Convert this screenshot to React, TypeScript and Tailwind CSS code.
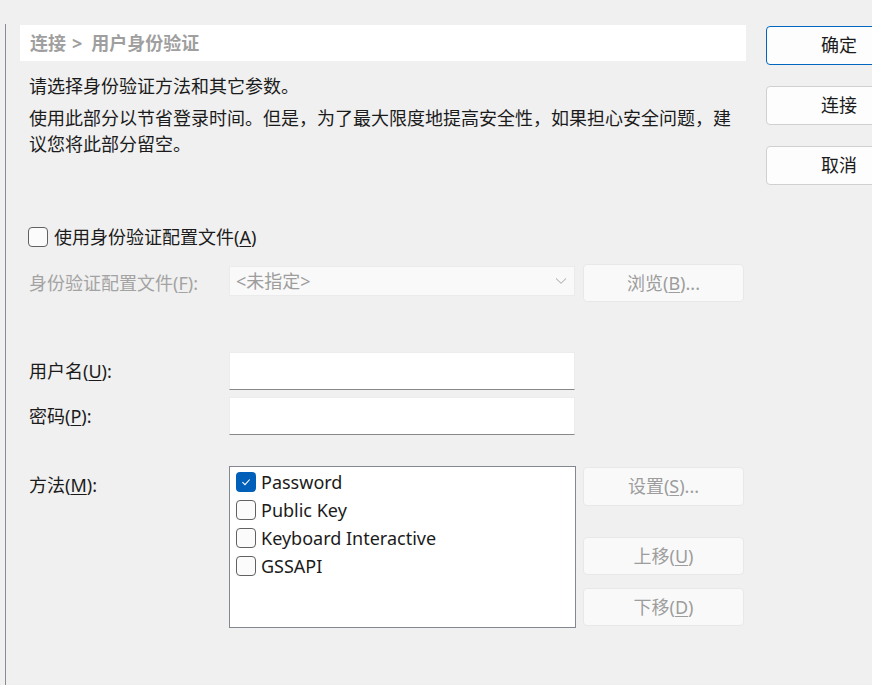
import React from "react";

function Box({ checked }: { checked?: boolean }) {
  return checked ? (
    <span className="flex h-[20px] w-[20px] shrink-0 items-center justify-center rounded-[4px] bg-[#005fb8]">
      <svg width="12" height="12" viewBox="0 0 12 12">
        <path d="M2.4 6.2 L5 8.7 L9.7 3.5" fill="none" stroke="white" strokeWidth="1.1" />
      </svg>
    </span>
  ) : (
    <span className="h-[20px] w-[20px] shrink-0 rounded-[4px] border border-[#616161] bg-[#fbfbfb]" />
  );
}

function DisabledButton({ children, className = "" }: { children: React.ReactNode; className?: string }) {
  return (
    <div
      className={
        "flex w-[161px] shrink-0 items-center justify-center rounded-[4px] border border-[#e8e8e8] bg-[#f9f9f9] text-[#9d9d9d] " +
        className
      }
    >
      {children}
    </div>
  );
}

export default function App() {
  return (
    <div className="flex h-[685px] w-[872px] overflow-hidden bg-[#f0f0f0] font-['Noto_Sans','Noto_Sans_CJK_SC',sans-serif] text-[18px] text-[#1b1b1b]">
      <div className="ml-[5px] mt-[24px] flex w-[741px] shrink-0 flex-col border-l border-[#8b8b98] pl-[14px] pt-[1px]">
        <div className="flex h-[36px] items-center bg-white pl-[10px] font-bold text-[#9f9f9f]">
          <span>连接</span>
          <span className="ml-[6px] mr-[9px]">&gt;</span>
          <span>用户身份验证</span>
        </div>
        <p className="mt-[12px] pl-[9px] leading-[26px]">请选择身份验证方法和其它参数。</p>
        <p className="mt-[6px] pl-[9px] leading-[26px]">
          使用此部分以节省登录时间。但是，为了最大限度地提高安全性，如果担心安全问题，建
          <br />
          议您将此部分留空。
        </p>

        <div className="mt-[67px] flex h-[26px] items-center gap-[6px] pl-[8px]">
          <Box />
          <span className="leading-[26px]">
            使用身份验证配置文件(<u className="underline-offset-2">A</u>)
          </span>
        </div>

        <div className="mt-[14px] flex h-[38px] items-start">
          <div className="w-[209px] shrink-0 self-center pl-[9px] text-[#a3a3a3]">
            身份验证配置文件(<u className="underline-offset-2">F</u>):
          </div>
          <div className="mt-[2px] flex h-[30px] w-[346px] shrink-0 items-center justify-between border border-[#ebebeb] bg-[#f9f9f9] pl-[6px] pr-[7px] text-[#9d9d9d]">
            <span>&lt;未指定&gt;</span>
            <svg width="12" height="8" viewBox="0 0 12 8">
              <path d="M1 1.5 L6 6.3 L11 1.5" fill="none" stroke="#a3a3a3" strokeWidth="1" />
            </svg>
          </div>
          <DisabledButton className="ml-[8px] h-[38px]">
            浏览(<u className="underline-offset-2">B</u>)...
          </DisabledButton>
        </div>

        <div className="mt-[50px] flex h-[38px] items-center">
          <div className="w-[209px] shrink-0 pl-[9px]">
            用户名(<u className="underline-offset-2">U</u>):
          </div>
          <div className="h-[38px] w-[346px] shrink-0 border border-[#ececec] border-b-[#888888] bg-white" />
        </div>

        <div className="mt-[7px] flex h-[38px] items-center">
          <div className="w-[209px] shrink-0 pl-[9px]">
            密码(<u className="underline-offset-2">P</u>):
          </div>
          <div className="h-[38px] w-[346px] shrink-0 border border-[#ececec] border-b-[#888888] bg-white" />
        </div>

        <div className="mt-[31px] flex items-start">
          <div className="mt-[6px] w-[209px] shrink-0 pl-[9px] leading-[26px]">
            方法(<u className="underline-offset-2">M</u>):
          </div>
          <div className="flex h-[162px] w-[347px] shrink-0 flex-col border border-[#828790] bg-white pl-[6px] pt-[1px]">
            {[
              { label: "Password", checked: true },
              { label: "Public Key" },
              { label: "Keyboard Interactive" },
              { label: "GSSAPI" },
            ].map((it) => (
              <div key={it.label} className="flex h-[28px] items-center gap-[5px]">
                <Box checked={it.checked} />
                <span className="leading-[28px]">{it.label}</span>
              </div>
            ))}
          </div>
          <div className="ml-[7px] flex flex-col">
            <DisabledButton className="mt-[1px] h-[39px]">
              设置(<u className="underline-offset-2">S</u>)...
            </DisabledButton>
            <DisabledButton className="mt-[31px] h-[38px]">
              上移(<u className="underline-offset-2">U</u>)
            </DisabledButton>
            <DisabledButton className="mt-[13px] h-[38px]">
              下移(<u className="underline-offset-2">D</u>)
            </DisabledButton>
          </div>
        </div>
      </div>

      <div className="ml-[20px] mt-[26px] flex shrink-0 flex-col">
        <div className="flex h-[39px] w-[146px] items-center justify-center rounded-[4px] border border-[#0067c0] bg-[#fdfdfd]">
          确定
        </div>
        <div className="mt-[21px] flex h-[39px] w-[146px] items-center justify-center rounded-[4px] border border-[#d0d0d0] bg-[#fdfdfd]">
          连接
        </div>
        <div className="mt-[21px] flex h-[39px] w-[146px] items-center justify-center rounded-[4px] border border-[#d0d0d0] bg-[#fdfdfd]">
          取消
        </div>
      </div>
    </div>
  );
}
